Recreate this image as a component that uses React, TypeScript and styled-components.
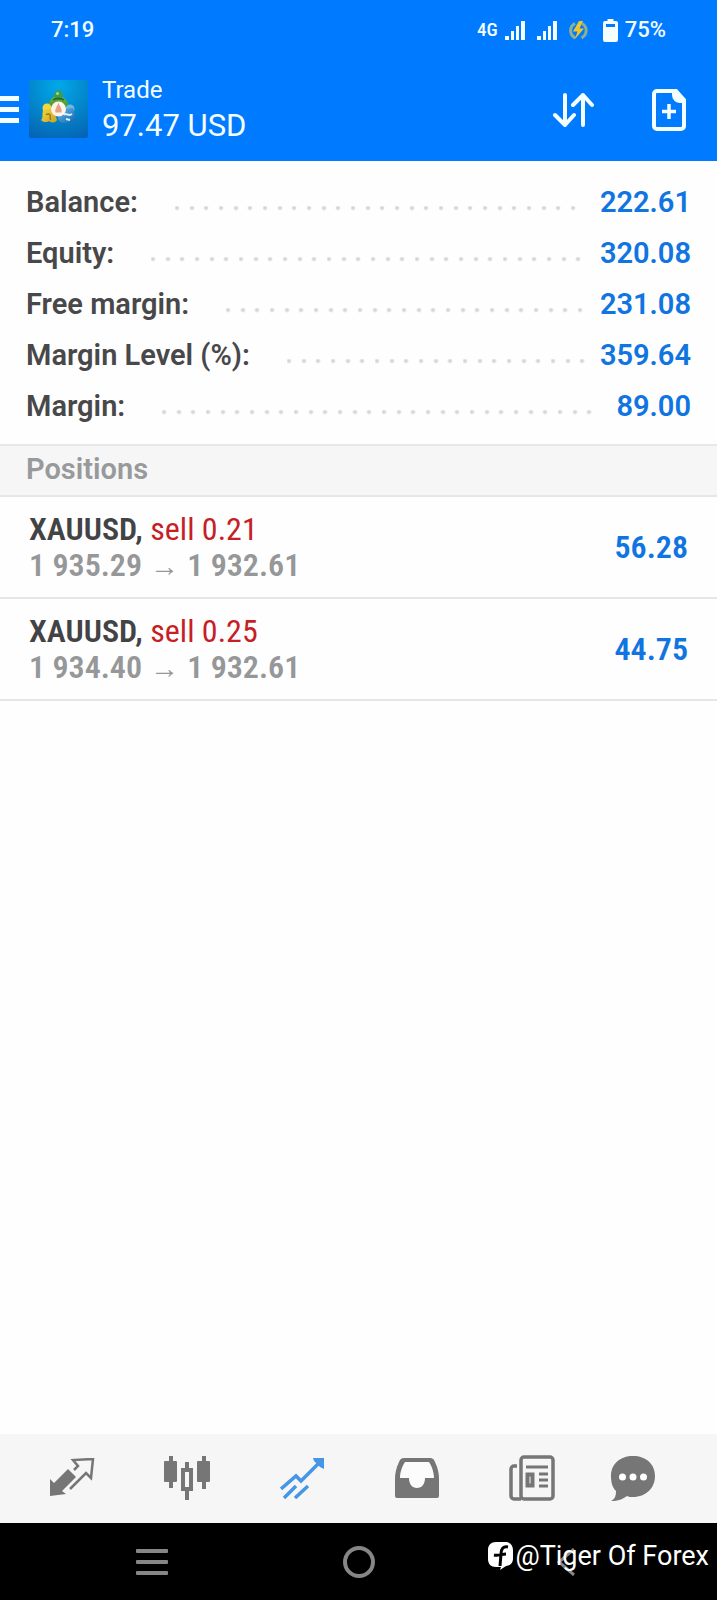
import React from 'react';
import styled, { createGlobalStyle } from 'styled-components';

const GlobalStyle = createGlobalStyle`
  *, *::before, *::after { box-sizing: border-box; }
  body {
    margin: 0;
    background: #fefefe;
    font-family: Roboto, "Liberation Sans", sans-serif;
  }
`;

const Screen = styled.div`
  display: flex;
  flex-direction: column;
  min-height: 100vh;
`;

const IconButton = styled.button`
  display: flex;
  align-items: center;
  justify-content: center;
  padding: 0;
  border: 0;
  background: none;
  color: inherit;
  cursor: pointer;
  svg { display: block; }
`;

const Header = styled.header`
  background: #007aff;
  color: #f4feff;
`;

const StatusBar = styled.div`
  display: flex;
  align-items: center;
  height: 60px;
  padding: 0 51px;
  font-size: 22px;
  font-weight: 500;
  line-height: 28px;
`;

const StatusIcons = styled.div`
  display: flex;
  align-items: center;
  margin-left: auto;
  svg { display: block; }
`;

const Network = styled.span`
  margin-right: 7px;
  font-family: "Roboto Condensed", Roboto, sans-serif;
  font-size: 19px;
`;

const Gap = styled.span<{ $size: number }>`
  width: ${(p) => p.$size}px;
`;

const AppBar = styled.div`
  display: flex;
  align-items: center;
  height: 101px;
  padding: 0 31px 2px 0;
`;

const AppLogo = styled.div`
  margin: 0 14px 2px 10px;
  svg { display: block; }
`;

const Titles = styled.div`
  flex: 1;
`;

const Title = styled.h1`
  margin: 0;
  font-size: 24px;
  font-weight: 400;
  line-height: 32px;
`;

const Profit = styled.p`
  margin: 0;
  font-size: 31px;
  line-height: 40px;
`;

const Actions = styled.div`
  display: flex;
  align-items: center;
  gap: 58px;
`;

const Summary = styled.dl`
  margin: 0;
  padding: 16px 26px 12px;
`;

const SummaryRow = styled.div`
  display: flex;
  align-items: baseline;
  height: 51px;
  font-size: 29px;
  font-weight: 600;
  line-height: 51px;
`;

const Label = styled.dt`
  color: #48484a;
`;

const Leader = styled.span`
  flex: 1;
  height: 6px;
  margin: 0 15px 0 37px;
  background-image:
    radial-gradient(circle at 2px 2px, #d6d6d6 1px, transparent 3px),
    radial-gradient(circle at 17px 2px, #d6d6d6 1px, transparent 3px),
    radial-gradient(circle at 31px 2px, #d6d6d6 1px, transparent 3px);
  background-size: 44px 6px;
`;

const Value = styled.dd`
  margin: 0;
  color: #1075e0;
`;

const SectionTitle = styled.h2`
  margin: 0;
  height: 53px;
  padding: 0 26px;
  border-top: 2px solid #e8e8e8;
  border-bottom: 2px solid #e6e6e6;
  background: #f6f6f6;
  color: #98999b;
  font-size: 29px;
  font-weight: 600;
  line-height: 47px;
`;

const Positions = styled.ul`
  flex: 1;
  margin: 0;
  padding: 0;
  list-style: none;
`;

const Position = styled.li`
  display: flex;
  align-items: center;
  justify-content: space-between;
  height: 102px;
  padding: 0 29px;
  border-bottom: 2px solid #e6e6e6;
  font-family: "Roboto Condensed", "Liberation Sans Narrow", Roboto, sans-serif;
  font-size: 32px;
  font-weight: 600;
  line-height: 36px;
`;

const Symbol = styled.div`
  color: #434345;
`;

const Side = styled.span`
  color: #c61f26;
  font-weight: 400;
`;

const Prices = styled.div`
  color: #969798;
`;

const Arrow = styled.span`
  font-family: "Liberation Sans", sans-serif;
  font-size: 29px;
  font-weight: 400;
  line-height: 24px;
`;

const Result = styled.div`
  color: #1075e0;
`;

const TabBar = styled.nav`
  display: grid;
  grid-template-columns: repeat(5, 4fr) 3fr;
  height: 89px;
  padding: 0 41px 2px 15px;
  background: #f6f6f6;
`;

const Tab = styled(IconButton)<{ $active?: boolean }>`
  color: ${(p) => (p.$active ? '#4596e6' : '#767676')};
`;

const SystemBar = styled.footer`
  position: relative;
  display: grid;
  grid-template-columns: repeat(3, 1fr);
  height: 77px;
  padding: 0 48px;
  background: #000;
  color: #868686;
`;

const Watermark = styled.div`
  position: absolute;
  top: 17px;
  right: 8px;
  display: flex;
  align-items: center;
  gap: 2px;
  color: #fff;
  font-size: 27px;
  line-height: 32px;
  pointer-events: none;
`;

const Signal = () => (
  <svg width="20" height="19" viewBox="0 0 20 19" fill="currentColor" aria-hidden="true">
    <rect x="0" y="15" width="4" height="4" />
    <rect x="6" y="10" width="3" height="9" />
    <rect x="11" y="5" width="3" height="14" />
    <rect x="16" y="0" width="4" height="19" />
  </svg>
);

const PowerSaver = () => (
  <svg width="19" height="19" viewBox="0 0 19 19" fill="none" aria-hidden="true">
    <path d="M6 2.500A8 8 0 0 0 6.500 17M13 2.500a8 8 0 0 1-.5 14.300" stroke="#8fb08c" strokeWidth="3" />
    <path d="M10 0 4 10.500h4.500L6 18l9-10.500h-4.500L14 0z" fill="#f0c52c" />
  </svg>
);

const Battery = () => (
  <svg width="15" height="23" viewBox="0 0 15 23" aria-hidden="true">
    <path fillRule="evenodd" fill="currentColor" d="M4.500 0h6v2H13a2 2 0 0 1 2 2v17a2 2 0 0 1-2 2H2a2 2 0 0 1-2-2V4a2 2 0 0 1 2-2h2.500zM3 5v3h9V5z" />
  </svg>
);

const MenuIcon = () => (
  <svg width="19" height="27" viewBox="0 0 19 27" fill="currentColor" aria-hidden="true">
    <rect y="0" width="19" height="5" />
    <rect y="11" width="19" height="5" />
    <rect y="22" width="19" height="5" />
  </svg>
);

const Logo = () => (
  <svg width="59" height="58" viewBox="0 0 59 58" role="img" aria-label="MetaTrader">
    <defs>
      <radialGradient id="sky" cx="0.5" cy="0.1" r="1">
        <stop offset="0" stopColor="#02a9ea" />
        <stop offset="0.6" stopColor="#0380c6" />
        <stop offset="1" stopColor="#0562b4" />
      </radialGradient>
      <linearGradient id="leaf" x1="0" y1="0" x2="0" y2="1">
        <stop offset="0" stopColor="#75bb35" />
        <stop offset="1" stopColor="#2b7d3d" />
      </linearGradient>
      <linearGradient id="gold" x1="0" y1="0" x2="1" y2="1">
        <stop offset="0" stopColor="#f0d93f" />
        <stop offset="1" stopColor="#d0a223" />
      </linearGradient>
      <linearGradient id="water" x1="0" y1="0" x2="1" y2="1">
        <stop offset="0" stopColor="#6dbbe6" />
        <stop offset="1" stopColor="#0d62ae" />
      </linearGradient>
    </defs>
    <rect width="59" height="58" rx="2" fill="url(#sky)" />
    <path d="M19 30c0-9 4-14 10-14s11 5 11 14l-5 3H24z" fill="url(#leaf)" />
    <circle cx="29.500" cy="15" r="4.500" fill="#3f9b50" />
    <circle cx="28.500" cy="13.500" r="1.500" fill="#9edb8a" />
    <path d="M24 20c3-2 8-2 11 0" stroke="#246b33" strokeWidth="2" fill="none" />
    <circle cx="18" cy="28" r="4.500" fill="#efd83c" />
    <path d="M14 30l10-2 4 12c-1 3-6 3-8 1-2 2-7 1-8-1 2-1 1-4 2-10z" fill="url(#gold)" />
    <path d="M17 34c2 1 3-1 4 1s-1 3 1 5" stroke="#9e7b18" strokeWidth="1.500" fill="none" />
    <circle cx="41" cy="29" r="4.500" fill="#6fb9e4" />
    <path d="M33 29l11-1c2 5 2 8 3 11-1 3-5 4-8 3-4 2-8 1-10-3z" fill="url(#water)" />
    <path d="M35 35c2-3 4 2 8-1M37 39l4 1" stroke="#d9f2ff" strokeWidth="2" fill="none" />
    <circle cx="29.500" cy="29" r="7.500" fill="#fff4ea" />
    <path d="M29.500 22.500c1 4 4 6 3 10h-6c-1-4 2-6 3-10z" fill="#e5a285" />
  </svg>
);

const SortIcon = () => (
  <svg width="42" height="36" viewBox="0 0 42 36" fill="none" stroke="currentColor" strokeWidth="4" strokeLinecap="round" strokeLinejoin="round" aria-hidden="true">
    <path d="M13 3v30M3 23l10 10 9-10M31 33V3M21 13l10-10 9 10" />
  </svg>
);

const NewOrderIcon = () => (
  <svg width="34" height="42" viewBox="0 0 34 42" fill="none" stroke="currentColor" aria-hidden="true">
    <path d="M2 5a3 3 0 0 1 3-3h19l8 9v26a3 3 0 0 1-3 3H5a3 3 0 0 1-3-3z" strokeWidth="4" />
    <path d="M20 2h5l8 9v3h-5a8 8 0 0 1-8-8z" fill="currentColor" stroke="none" />
    <path d="M17 15v15M10 22.500h14" strokeWidth="3.500" />
  </svg>
);

const QuotesIcon = () => (
  <svg width="46" height="40" viewBox="0 0 46 40" aria-hidden="true">
    <path d="M1 21l4 4L19 11l8 8-14 14 4 3-16 2z" fill="currentColor" />
    <path d="M25 12l4-4-5-6 20-1-2 19-5-5-16 16" fill="none" stroke="currentColor" strokeWidth="2.500" />
  </svg>
);

const ChartIcon = () => (
  <svg width="46" height="46" viewBox="0 0 46 46" fill="currentColor" aria-hidden="true">
    <path d="M5 1h4v5h3a1 1 0 0 1 1 1v19a1 1 0 0 1-1 1H9v6H5v-6H1a1 1 0 0 1-1-1V7a1 1 0 0 1 1-1h4zM38 1h4v5h3a1 1 0 0 1 1 1v19a1 1 0 0 1-1 1h-3v7h-4v-7h-4a1 1 0 0 1-1-1V7a1 1 0 0 1 1-1h4z" />
    <path fillRule="evenodd" d="M21 7h4v6h4v23h-4v9h-4v-9h-4V13h4zM21 17v15h4V17z" />
  </svg>
);

const TradeIcon = () => (
  <svg width="44" height="42" viewBox="0 0 44 42" fill="none" stroke="currentColor" strokeWidth="3.500" aria-hidden="true">
    <path d="M1 32l15-13 5 5L40 5M4 41l12-12M15 41l13-12" />
    <path d="M33 1h11v11l-4-2-6-6z" fill="currentColor" stroke="none" />
  </svg>
);

const HistoryIcon = () => (
  <svg width="46" height="42" viewBox="0 0 46 42" aria-hidden="true">
    <path d="M10 1h26c3 0 4 2 5 4 3 6 4 12 4 17v17a2 2 0 0 1-2 2H3a2 2 0 0 1-2-2V22C1 17 2 11 5 5c1-2 2-4 5-4z" fill="currentColor" />
    <path d="M11 5h24c2 3 5 9 5 16H31c0 6-3 10-8 10s-8-4-8-10H6C6 14 9 8 11 5z" fill="#fcfcfc" />
  </svg>
);

const NewsIcon = () => (
  <svg width="46" height="46" viewBox="0 0 46 46" fill="none" stroke="currentColor" strokeWidth="3.500" aria-hidden="true">
    <rect x="12" y="2" width="32" height="42" rx="3" />
    <path d="M12 44H5a3 3 0 0 1-3-3V14a3 3 0 0 1 3-3h3" />
    <path d="M17 12h22M30 19h9M30 25h9M30 31h9" strokeWidth="3" />
    <rect x="18.500" y="19.500" width="5" height="11" strokeWidth="4" />
  </svg>
);

const ChatIcon = () => (
  <svg width="46" height="46" viewBox="0 0 46 46" aria-hidden="true">
    <path d="M23 1c13 0 22 8 22 20s-9 21-22 21c-3 0-4 0-6-1-4 3-9 5-16 5 4-2 5-5 5-10-4-4-5-9-5-15C1 9 10 1 23 1z" fill="currentColor" />
    <g fill="#fff">
      <circle cx="12.500" cy="22" r="3.500" />
      <circle cx="23" cy="22" r="3.500" />
      <circle cx="33.500" cy="22" r="3.500" />
    </g>
  </svg>
);

const SocialLogo = () => (
  <svg width="25" height="28" viewBox="0 0 25 28" aria-hidden="true">
    <path d="M8 0h9c5 0 8 3 8 8v9c0 4-3 7-7 7l-6 4 1-3H8c-5 0-8-3-8-8V8c0-5 3-8 8-8z" fill="#fff" />
    <path d="M20 5c-5-1-7 2-7 7l-1 12M6 13c4 1 8-1 12-1" fill="none" stroke="#000" strokeWidth="3" />
  </svg>
);

const RecentsIcon = () => (
  <svg width="32" height="26" viewBox="0 0 32 26" fill="currentColor" aria-hidden="true">
    <rect width="32" height="4" rx="1" />
    <rect y="11" width="32" height="4" rx="1" />
    <rect y="22" width="32" height="4" rx="1" />
  </svg>
);

const HomeIcon = () => (
  <svg width="32" height="32" viewBox="0 0 32 32" fill="none" stroke="currentColor" strokeWidth="4" aria-hidden="true">
    <circle cx="16" cy="16" r="14" />
  </svg>
);

const BackIcon = () => (
  <svg width="18" height="28" viewBox="0 0 18 28" fill="none" stroke="currentColor" strokeWidth="3" aria-hidden="true">
    <path d="M17 1L2 14l15 13" />
  </svg>
);

const account = [
  ['Balance:', '222.61'],
  ['Equity:', '320.08'],
  ['Free margin:', '231.08'],
  ['Margin Level (%):', '359.64'],
  ['Margin:', '89.00'],
];

const positions = [
  { symbol: 'XAUUSD', side: 'sell 0.21', open: '1 935.29', current: '1 932.61', result: '56.28' },
  { symbol: 'XAUUSD', side: 'sell 0.25', open: '1 934.40', current: '1 932.61', result: '44.75' },
];

const tabs = [
  { name: 'Quotes', Icon: QuotesIcon },
  { name: 'Chart', Icon: ChartIcon },
  { name: 'Trade', Icon: TradeIcon },
  { name: 'History', Icon: HistoryIcon },
  { name: 'News', Icon: NewsIcon },
  { name: 'Messages', Icon: ChatIcon },
];

export default function App() {
  return (
    <Screen>
      <GlobalStyle />
      <Header>
        <StatusBar>
          <span>7:19</span>
          <StatusIcons>
            <Network>4G</Network>
            <Signal />
            <Gap $size={12} />
            <Signal />
            <Gap $size={12} />
            <PowerSaver />
            <Gap $size={15} />
            <Battery />
            <Gap $size={7} />
            <span>75%</span>
          </StatusIcons>
        </StatusBar>
        <AppBar>
          <IconButton type="button" aria-label="Menu"><MenuIcon /></IconButton>
          <AppLogo><Logo /></AppLogo>
          <Titles>
            <Title>Trade</Title>
            <Profit>97.47 USD</Profit>
          </Titles>
          <Actions>
            <IconButton type="button" aria-label="Sort"><SortIcon /></IconButton>
            <IconButton type="button" aria-label="New order"><NewOrderIcon /></IconButton>
          </Actions>
        </AppBar>
      </Header>
      <Summary>
        {account.map(([label, value]) => (
          <SummaryRow key={label}>
            <Label>{label}</Label>
            <Leader />
            <Value>{value}</Value>
          </SummaryRow>
        ))}
      </Summary>
      <SectionTitle>Positions</SectionTitle>
      <Positions>
        {positions.map((p) => (
          <Position key={p.side}>
            <div>
              <Symbol>{p.symbol}, <Side>{p.side}</Side></Symbol>
              <Prices>{p.open}<Arrow> → </Arrow>{p.current}</Prices>
            </div>
            <Result>{p.result}</Result>
          </Position>
        ))}
      </Positions>
      <TabBar>
        {tabs.map(({ name, Icon }) => (
          <Tab key={name} type="button" aria-label={name} $active={name === 'Trade'}><Icon /></Tab>
        ))}
      </TabBar>
      <SystemBar>
        <IconButton type="button" aria-label="Recent apps"><RecentsIcon /></IconButton>
        <IconButton type="button" aria-label="Home"><HomeIcon /></IconButton>
        <IconButton type="button" aria-label="Back"><BackIcon /></IconButton>
        <Watermark><SocialLogo />@Tiger Of Forex</Watermark>
      </SystemBar>
    </Screen>
  );
}
